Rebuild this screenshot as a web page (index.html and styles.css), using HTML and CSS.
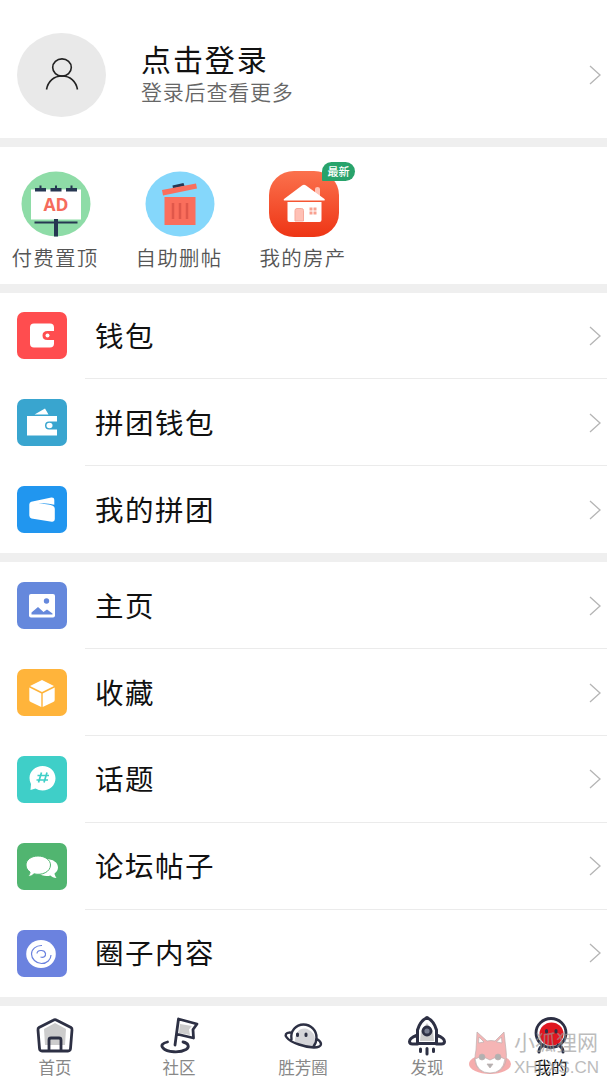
FILE: index.html
```html
<!DOCTYPE html>
<html lang="zh-CN">

<head>
    <meta charset="UTF-8">
    <meta name="viewport" content="width=device-width, initial-scale=1.0">
    <title>我的</title>
    <link rel="stylesheet" href="styles.css">
</head>

<body>
    <svg class="defs" width="0" height="0">
        <symbol id="arrow" viewBox="0 0 14 22">
            <path d="M2 2l10 9-10 9" fill="none" stroke="#b5b5b5" stroke-width="1.3" />
        </symbol>
    </svg>

    <header class="profile">
        <div class="avatar">
            <svg width="34" height="34" viewBox="0 0 34 34" fill="none" stroke="#222" stroke-width="1.600">
                <ellipse cx="17" cy="9.500" rx="9.300" ry="8.600" />
                <path d="M1.500 31.500C3 23 9 18 17 18s14 5 15.500 13.500" />
            </svg>
        </div>
        <div class="profile-text">
            <h1>点击登录</h1>
            <p>登录后查看更多</p>
        </div>
        <svg class="arrow"><use href="#arrow" /></svg>
    </header>

    <section class="shortcuts">
        <a class="shortcut">
            <svg width="70" height="66" viewBox="0 0 70 66">
                <ellipse cx="35" cy="33" rx="34.500" ry="32.500" fill="#8edca7" />
                <path d="M10 18.500h50v30H10z" fill="#fff" />
                <path d="M14 17h11v3.500H14zM29.500 17h11v3.500h-11zM45 17h11v3.500H45zM18.500 14.500h2v3h-2zM34 14.500h2v3h-2zM49.500 14.500h2v3h-2zM13.500 50.500h43v2h-43zM33 48h4v17.500h-4z" fill="#263752" />
                <text x="35" y="39.500" class="ad-text" textLength="25" lengthAdjust="spacingAndGlyphs">AD</text>
            </svg>
            <span>付费置顶</span>
        </a>
        <a class="shortcut">
            <svg width="70" height="66" viewBox="0 0 70 66">
                <ellipse cx="35" cy="33" rx="34.500" ry="32.500" fill="#85d7fb" />
                <path d="M27.500 14.500l11-2.500 1 3-11.500 2.500z" fill="#263752" />
                <path d="M17 19l34-6.500 1 5-34 7zM19.500 26h31v28h-31z" fill="#fa6e5c" />
                <path d="M28 32v16M35 32v16M42 32v16" stroke="#e0574a" stroke-width="2.500" />
            </svg>
            <span>自助删帖</span>
        </a>
        <a class="shortcut">
            <svg width="70" height="66" viewBox="0 0 70 66">
                <defs>
                    <linearGradient id="house" x2="0" y2="1">
                        <stop stop-color="#fb714d" />
                        <stop offset="1" stop-color="#ee3515" />
                    </linearGradient>
                </defs>
                <rect width="70" height="66" rx="25" ry="24" fill="url(#house)" />
                <path d="M46 28V18q0-2 2.500-2t2.500 2v11z" fill="#ffc1b4" />
                <path d="M15 28L33 14.500q2-1.500 4 0L55.500 28q1 1.500-1 1.500H16q-2 0-1-1.500zM18.500 31h34v18q0 2-2 2h-30q-2 0-2-2z" fill="#fff" />
                <path d="M26 50V39.500q0-2 2-2h4.500q2 0 2 2V50z" fill="#ffc0b5" stroke="#f6a99b" />
                <path d="M40.500 36.500h3v3h-3zM44.500 36.500h3v3h-3zM40.500 40.500h3v3h-3zM44.500 40.500h3v3h-3z" fill="#f8a090" />
            </svg>
            <b class="badge">最新</b>
            <span>我的房产</span>
        </a>
    </section>

    <nav class="menu">
        <a class="menu-item">
            <svg class="icon red" viewBox="0 0 50 47">
                <path d="M17 11.500h16q4 0 4 4V19h-6.500q-5 0-5 4.500t5 4.500H37v3.500q0 4-4 4H17q-4 0-4-4v-16q0-4 4-4z" />
                <circle cx="30.500" cy="23.500" r="2" />
            </svg>
            <span>钱包</span><svg class="arrow"><use href="#arrow" /></svg>
        </a>
        <a class="menu-item">
            <svg class="icon cyan" viewBox="0 0 50 47">
                <path d="M10 17h30v5.500h-8q-4 0-4 4t4 4h8v6H10zM17.500 15.500L28 9.500l3.500 6z" />
                <ellipse cx="32.500" cy="26.500" rx="3" ry="2.700" />
            </svg>
            <span>拼团钱包</span><svg class="arrow"><use href="#arrow" /></svg>
        </a>
        <a class="menu-item">
            <svg class="icon blue" viewBox="0 0 50 47">
                <path d="M12.300 18.500q0-2 2-2.700l20-4.300q3-.3 3 2.200v5q-8-2.200-16-1.200 9 .2 14.500 2.300 2 1 2 3v10.500q0 2.700-3 2.400L14.500 32.500q-2-.7-2.200-3z" />
            </svg>
            <span>我的拼团</span><svg class="arrow"><use href="#arrow" /></svg>
        </a>
    </nav>

    <nav class="menu">
        <a class="menu-item">
            <svg class="icon indigo" viewBox="0 0 50 47">
                <rect x="12" y="12" width="26" height="23.500" rx="2" />
                <path class="cut" d="M14.500 32.500v-2l6.500-5.500 5.500 5 3.500-2.500 5.500 4v1z" />
                <circle class="cut" cx="29.500" cy="19" r="2.700" />
            </svg>
            <span>主页</span><svg class="arrow"><use href="#arrow" /></svg>
        </a>
        <a class="menu-item">
            <svg class="icon orange" viewBox="0 0 50 47">
                <path d="M25 11l12 6-12 6-12-6zM12.300 18.500l12 6V38l-10.500-5q-1.500-.7-1.500-2zM37.700 18.500l-12 6V38l10.500-5q1.500-.7 1.500-2z" />
            </svg>
            <span>收藏</span><svg class="arrow"><use href="#arrow" /></svg>
        </a>
        <a class="menu-item">
            <svg class="icon teal" viewBox="0 0 50 47">
                <path d="M25.500 10C18.500 10 12.500 15 12.500 22q0 3.500 1.500 6l-.5 6 5-1.500q3 2 7 2C33 34.500 38.500 29 38.500 22.200S33 10 25.500 10z" />
                <path class="line" d="M24.500 16.500l-3 10M30 16.500l-3 10M20.500 19.500H32M19.500 24H31" />
            </svg>
            <span>话题</span><svg class="arrow"><use href="#arrow" /></svg>
        </a>
        <a class="menu-item">
            <svg class="icon green" viewBox="0 0 50 47">
                <path d="M29 16c7 0 12 3.500 12 8.500 0 2.500-1.500 4.500-3.500 6 .2 1.700 1 3 2 4.500-3 0-4.500-1-6-2.500-5 1.200-9 .3-12.500-3z" />
                <path d="M21 13C14 13 9 17 9 22c0 3 1.500 5.300 4 7 0 1.700-.8 3-2 4.500 3 0 4.500-1.200 6-2.700 8 2 16.500-2 16.500-8.800C33.500 17 28 13 21 13z" stroke="#51b570" stroke-width="1" />
            </svg>
            <span>论坛帖子</span><svg class="arrow"><use href="#arrow" /></svg>
        </a>
        <a class="menu-item">
            <svg class="icon violet" viewBox="0 0 50 47">
                <ellipse cx="24" cy="24" rx="14.800" ry="14" />
                <path class="line thin" d="M25 15.500c-6-.3-10.500 3.800-10.500 8.500s4.500 9.500 10 9.500 9.500-4 9.500-8.500M20 23.500c0-3.500 7.500-4.500 8.500 0 .5 3-2 4.500-5 3.500" />
            </svg>
            <span>圈子内容</span><svg class="arrow"><use href="#arrow" /></svg>
        </a>
    </nav>

    <footer class="tabbar">
        <a class="tab">
            <svg width="40" height="40" viewBox="0 0 40 40">
                <path d="M9 13l11-6 11 6-1 16H10z" fill="#ccc" />
                <path d="M18.300 4.200q1.700-1 3.400 0L36 11.500q1.200.7 1 2.500l-1.500 18.500q-.2 2.500-2.500 2.500H7q-2.300 0-2.500-2.500L3 14q-.2-1.800 1-2.500zM14 34.500V24q0-2 2-2h8q2 0 2 2v10.500" />
            </svg>
            <span>首页</span>
        </a>
        <a class="tab">
            <svg width="40" height="40" viewBox="0 0 40 40">
                <path d="M21 8l12 2-3 3.500 1 5.500-11-2z" fill="#ccc" />
                <path d="M16 29L19.500 3l18.500 5-4 5.500.5 8.500L17.500 18M8.500 26C3.500 27 1.500 29.500 4 32c4 4.500 17 5 23 1.500 4-2.500 2.500-6.500-3-7.500" />
            </svg>
            <span>社区</span>
        </a>
        <a class="tab">
            <svg width="40" height="40" viewBox="0 0 40 40">
                <path d="M12 26c0-14 9-15 14-12 7 4 7 9 4 17q-10-1-18-5z" fill="#d4d4d8" />
                <path d="M8.500 23.500C7 15 13 8.500 20.500 8.500S33.500 14.500 33.500 21.500q0 5-3 9M7 16.500c-9 .5-3 8.500 9 12C26 32 38 33 38 28q0-2.500-4-5" stroke-width="2.400" />
                <path d="M14.500 18v1.500M23 18v1.500" stroke-width="3" />
            </svg>
            <span>胜芳圈</span>
        </a>
        <a class="tab">
            <svg width="40" height="40" viewBox="0 0 40 40">
                <path d="M14 15l6-8 6 8 1 10H13z" fill="#ccc" />
                <path d="M10.500 27.500V14Q13 5 20 1.500q7 3.500 9.500 12.500v13.500zM10.500 19q-8 3-8 6.500 0 2.500 3 2.500h5M29.500 19q8 3 8 6.500 0 2.500-3 2.500h-5M13.500 33v2.500M20 32.500v5.500M26.500 33v2.500" stroke-width="3" />
                <circle cx="20" cy="15" r="4" fill="#777d90" />
            </svg>
            <span>发现</span>
        </a>
        <a class="tab active">
            <svg width="40" height="40" viewBox="0 0 40 40">
                <ellipse cx="20.500" cy="18" rx="12" ry="11.500" fill="#e01720" />
                <ellipse cx="20" cy="17" rx="15" ry="14.500" />
                <path d="M13 29q-5 2-5 7M27 29q5 2 5 7" stroke-width="3" />
                <path d="M15.500 14.500v1.500M25 14.500v1.500" stroke-width="3" />
            </svg>
            <span>我的</span>
        </a>
    </footer>

    <div class="watermark">
        <svg width="44" height="46" viewBox="0 0 44 46" stroke="#9c8585" stroke-width=".7">
            <ellipse cx="22" cy="34" rx="21" ry="10" fill="#f08080" stroke="none" />
            <path d="M8 20L9 2l10 9q4-1 8 0L36 2l2 18q3 22-16 23Q3 42 8 20z" fill="#f08f8f" />
            <path d="M10.500 13l.5-6 5 5zM34 13l-.5-6-5 5z" fill="#fff" />
            <path d="M7 29q7-4 15 1 8-5 15-1-2 14-15 14T7 29z" fill="#fff" />
            <circle cx="14" cy="27" r="3" fill="#888" />
            <circle cx="30" cy="27" r="3" fill="#888" />
            <path d="M19 34h6l-3 4z" fill="#888" />
        </svg>
        <p>小狐狸网<br><em>XHLXS.CN</em></p>
    </div>
</body>

</html>
```

FILE: styles.css
```css
* {
    box-sizing: border-box;
}

body {
    margin: 0;
    height: 1080px;
    overflow: hidden;
    background: #efefef;
    color: #111;
    font-family: "Noto Sans CJK SC", sans-serif;
    display: flex;
    flex-direction: column;
    gap: 9px;
}

h1,
p {
    margin: 0;
    font-weight: 400;
}

.defs {
    position: absolute;
}

.profile,
.shortcuts,
.menu,
.tabbar {
    flex-shrink: 0;
    background: #fff;
}

.profile {
    height: 138px;
    padding: 12px 5px 0 17px;
    display: flex;
    align-items: center;
}

.avatar {
    width: 89px;
    height: 84px;
    border-radius: 50%;
    background: #e9e9e9;
    display: flex;
    align-items: center;
    justify-content: center;
}

.profile-text {
    flex: 1;
    padding: 0 0 1px 35px;
}

.profile-text h1 {
    font-size: 30px;
    line-height: 34px;
    letter-spacing: 1.9px;
}

.profile-text p {
    font-size: 21px;
    line-height: 33px;
    letter-spacing: 0.8px;
    color: #666;
    font-weight: 350;
}

.arrow {
    width: 14px;
    height: 22px;
}

.shortcuts {
    height: 136.5px;
    padding-top: 24px;
    display: flex;
}

.shortcut {
    position: relative;
    width: 124px;
    padding-right: 13px;
    display: flex;
    flex-direction: column;
    align-items: center;
    color: #555;
    font-size: 20.5px;
    font-weight: 350;
    line-height: 30px;
    letter-spacing: 1.2px;
}

.shortcut > span {
    margin: 5px 1px 0 0;
}

.ad-text {
    font-family: "Open Sans", sans-serif;
    font-size: 17px;
    font-weight: 700;
    fill: #f56b5c;
    text-anchor: middle;
    letter-spacing: 0;
}

.badge {
    position: absolute;
    left: 74px;
    top: -9px;
    width: 33px;
    height: 19px;
    border-radius: 10px 10px 10px 1px;
    background: #28a36b;
    color: #fff;
    font-size: 11px;
    font-weight: 500;
    line-height: 18px;
    letter-spacing: 0;
    text-align: center;
}

.menu-item {
    height: 86.9px;
    padding: 0 5px 0 17px;
    display: flex;
    align-items: center;
    font-size: 28.5px;
    letter-spacing: 1.5px;
    background: linear-gradient(#ebebeb, #ebebeb) 85px 100% / 100% 1px no-repeat;
}

.menu-item:last-child {
    background: none;
}

.menu-item span {
    flex: 1;
    padding: 0 0 3px 28px;
}

.icon {
    width: 50px;
    height: 47px;
    border-radius: 7px;
    background: var(--color);
    fill: #fff;
}

.icon .cut {
    fill: var(--color);
}

.icon .line {
    fill: none;
    stroke: var(--color);
    stroke-width: 1.7;
}

.icon .thin {
    stroke-width: 1.2;
}

.red { --color: #ff4d4f; }
.cyan { --color: #39a5cf; }
.blue { --color: #2196ef; }
.indigo { --color: #6588dc; }
.orange { --color: #ffb43b; }
.teal { --color: #3fcfc8; }
.green { --color: #51b570; }
.violet { --color: #6b82df; }

.tabbar {
    height: 75px;
    padding-right: 1px;
    display: grid;
    grid-template-columns: repeat(5, 124px);
    justify-content: center;
}

.tab {
    padding-top: 10px;
    display: flex;
    flex-direction: column;
    align-items: center;
    font-size: 16.5px;
    line-height: 22px;
    color: #888;
}

.tab svg {
    fill: none;
    stroke: #2d3044;
    stroke-width: 2.8;
    stroke-linecap: round;
    stroke-linejoin: round;
}

.tab svg [fill] {
    stroke: none;
}

.tab svg circle[fill] {
    stroke: #2d3044;
}

.tab.active {
    color: #111;
}

.watermark {
    position: absolute;
    right: 8px;
    bottom: 1px;
    display: flex;
    gap: 2px;
    opacity: 0.65;
    color: #999;
    font-size: 21px;
    line-height: 23px;
}

.watermark em {
    font-family: "Liberation Sans", sans-serif;
    font-size: 17px;
    font-style: normal;
}
```
